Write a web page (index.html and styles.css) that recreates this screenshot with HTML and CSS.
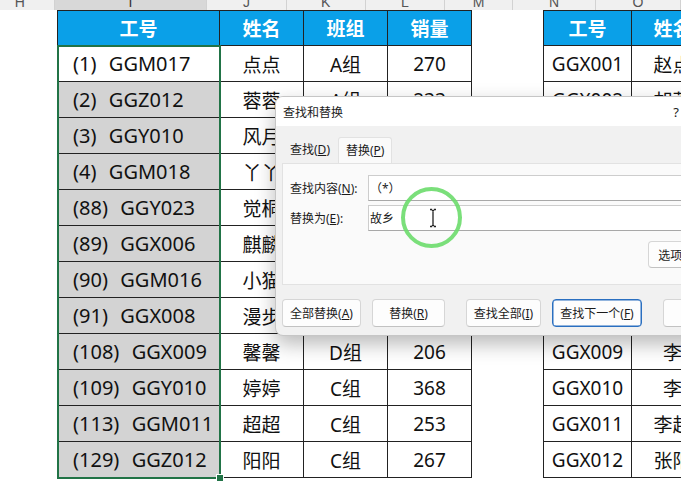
FILE: index.html
```html
<!DOCTYPE html>
<html lang="zh-CN">
<head>
<meta charset="utf-8">
<title>查找和替换</title>
<link rel="stylesheet" href="styles.css">
</head>
<body>
<div class="colheads">
  <div class="ch w-h"><span>H</span></div>
  <div class="ch w-i sel"><span>I</span></div>
  <div class="ch w-j"><span>J</span></div>
  <div class="ch w-k"><span>K</span></div>
  <div class="ch w-l"><span>L</span></div>
  <div class="ch w-m"><span>M</span></div>
  <div class="ch w-n"><span>N</span></div>
  <div class="ch w-o"><span>O</span></div>
</div>
<div class="sheet">
  <div class="gutter"></div>
  <div class="tbl">
    <div class="row head"><div class="cell c-i">工号</div><div class="cell c-j">姓名</div><div class="cell c-k">班组</div><div class="cell c-l">销量</div></div>
    <div class="row"><div class="cell c-i id active">(1)  GGM017</div><div class="cell c-j">点点</div><div class="cell c-k">A组</div><div class="cell c-l">270</div></div>
    <div class="row"><div class="cell c-i id">(2)  GGZ012</div><div class="cell c-j">蓉蓉</div><div class="cell c-k">A组</div><div class="cell c-l">233</div></div>
    <div class="row"><div class="cell c-i id">(3)  GGY010</div><div class="cell c-j">风月</div><div class="cell c-k">B组</div><div class="cell c-l">198</div></div>
    <div class="row"><div class="cell c-i id">(4)  GGM018</div><div class="cell c-j">丫丫</div><div class="cell c-k">B组</div><div class="cell c-l">312</div></div>
    <div class="row"><div class="cell c-i id">(88)  GGY023</div><div class="cell c-j">觉桐</div><div class="cell c-k">B组</div><div class="cell c-l">245</div></div>
    <div class="row"><div class="cell c-i id">(89)  GGX006</div><div class="cell c-j">麒麟</div><div class="cell c-k">C组</div><div class="cell c-l">287</div></div>
    <div class="row"><div class="cell c-i id">(90)  GGM016</div><div class="cell c-j">小猫</div><div class="cell c-k">D组</div><div class="cell c-l">176</div></div>
    <div class="row"><div class="cell c-i id">(91)  GGX008</div><div class="cell c-j">漫步</div><div class="cell c-k">D组</div><div class="cell c-l">301</div></div>
    <div class="row"><div class="cell c-i id">(108)  GGX009</div><div class="cell c-j">馨馨</div><div class="cell c-k">D组</div><div class="cell c-l">206</div></div>
    <div class="row"><div class="cell c-i id">(109)  GGY010</div><div class="cell c-j">婷婷</div><div class="cell c-k">C组</div><div class="cell c-l">368</div></div>
    <div class="row"><div class="cell c-i id">(113)  GGM011</div><div class="cell c-j">超超</div><div class="cell c-k">C组</div><div class="cell c-l">253</div></div>
    <div class="row"><div class="cell c-i id">(129)  GGZ012</div><div class="cell c-j">阳阳</div><div class="cell c-k">C组</div><div class="cell c-l">267</div></div>
    <div class="selection"><div class="handle"></div></div>
  </div>
  <div class="gap"></div>
  <div class="tbl">
    <div class="row head"><div class="cell c-n">工号</div><div class="cell c-o">姓名</div></div>
    <div class="row"><div class="cell c-n">GGX001</div><div class="cell c-o">赵点</div></div>
    <div class="row"><div class="cell c-n">GGX002</div><div class="cell c-o">胡蓉</div></div>
    <div class="row"><div class="cell c-n">GGX003</div><div class="cell c-o">王风</div></div>
    <div class="row"><div class="cell c-n">GGX004</div><div class="cell c-o">刘丫</div></div>
    <div class="row"><div class="cell c-n">GGX005</div><div class="cell c-o">陈觉</div></div>
    <div class="row"><div class="cell c-n">GGX006</div><div class="cell c-o">周麒</div></div>
    <div class="row"><div class="cell c-n">GGX007</div><div class="cell c-o">吴猫</div></div>
    <div class="row"><div class="cell c-n">GGX008</div><div class="cell c-o">郑漫</div></div>
    <div class="row"><div class="cell c-n">GGX009</div><div class="cell c-o">李</div></div>
    <div class="row"><div class="cell c-n">GGX010</div><div class="cell c-o">李</div></div>
    <div class="row"><div class="cell c-n">GGX011</div><div class="cell c-o">李超</div></div>
    <div class="row"><div class="cell c-n">GGX012</div><div class="cell c-o">张阳</div></div>
  </div>
</div>

<div class="dlg">
  <div class="title"><span>查找和替换</span><span class="spacer"></span><span class="help">?</span><span class="close">×</span></div>
  <div class="dbody">
    <div class="tabs">
      <div class="tab">查找(<u>D</u>)</div>
      <div class="tab on">替换(<u>P</u>)</div>
    </div>
    <div class="panel">
      <div class="frow"><div class="lbl">查找内容(<u>N</u>):</div><div class="inp">（*）</div></div>
      <div class="frow"><div class="lbl">替换为(<u>E</u>):</div><div class="inp">故乡</div></div>
      <div class="optrow"><div class="btn opt">选项(<u>T</u>) &gt;&gt;</div></div>
    </div>
    <div class="btnrow">
      <div class="btn b1">全部替换(<u>A</u>)</div>
      <div class="btn b2">替换(<u>R</u>)</div>
      <div class="btn b3">查找全部(<u>I</u>)</div>
      <div class="btn b4 focus">查找下一个(<u>F</u>)</div>
      <div class="btn b5">关闭</div>
    </div>
  </div>
</div>

<div class="ring"></div>
<svg class="ibeam" width="10" height="20" viewBox="0 0 10 20"><path d="M2 1.5h2.2M5.8 1.5H8M5 2v16M2 18.5h2.2M5.8 18.5H8M4 2.2l1 .8 1-.8M4 17.8l1-.8 1 .8" stroke="#222" stroke-width="1.3" fill="none"/></svg>
</body>
</html>
```
FILE: styles.css
```css
body {
  margin: 0;
  width: 681px;
  height: 494px;
  overflow: hidden;
  background: #fff;
  position: relative;
  font-family: "Noto Sans", "Noto Sans CJK SC", sans-serif;
}

.colheads {
  display: flex;
  height: 10px;
  background: #f0f0f0;
  overflow: hidden;
}
.ch {
  box-sizing: border-box;
  height: 10px;
  border-right: 1px solid #d2d2d2;
  overflow: hidden;
  text-align: center;
  color: #555;
  font: 14px/16px "Liberation Sans", sans-serif;
}
.ch span { display: block; margin-top: -6px; }
.ch.sel { background: #d8d8d8; color: #333; }
.w-h { width: 57px; padding-right: 14px; }
.w-i { width: 162px; }
.w-j { width: 84px; }
.w-k { width: 84px; }
.w-l { width: 84px; }
.w-m { width: 72px; }
.w-n { width: 88px; }
.w-o { width: 90px; }

.sheet { display: flex; align-items: flex-start; }
.gutter { width: 57px; flex: none; }
.gap { width: 71px; flex: none; }
.tbl {
  position: relative;
  border-top: 1px solid #222;
  border-left: 1px solid #222;
  flex: none;
}
.row { display: flex; height: 36px; }
.row.head { height: 35px; background: #0aa0e8; }
.row.head .cell { color: #fff; font-weight: 700; }
.cell {
  box-sizing: border-box;
  border-right: 1px solid #222;
  border-bottom: 1px solid #222;
  display: flex;
  align-items: center;
  justify-content: center;
  font-size: 19px;
  color: #111;
  white-space: pre;
}
.c-i { width: 162px; }
.c-j { width: 84px; }
.c-k { width: 84px; }
.c-l { width: 84px; }
.c-n { width: 88px; }
.c-o { width: 82px; }
.cell.id {
  justify-content: flex-start;
  padding-left: 15px;
  background: #d3d3d3;
  font-size: 20px;
  word-spacing: 1px;
}
.cell.id.active { background: #fff; }

.selection {
  position: absolute;
  left: -1px;
  top: 34px;
  width: 164px;
  height: 434px;
  box-sizing: border-box;
  border: 2px solid #217346;
}
.handle {
  position: absolute;
  right: -5px;
  bottom: -5px;
  width: 6px;
  height: 6px;
  background: #217346;
  border: 1px solid #fff;
}

.dlg {
  position: absolute;
  left: 275px;
  top: 96px;
  width: 480px;
  height: 240px;
  box-sizing: border-box;
  border: 1px solid #c6c6c6;
  border-radius: 8px;
  background: #f1f1f1;
  box-shadow: 0 8px 20px rgba(0, 0, 0, 0.28);
  overflow: hidden;
  font-size: 12px;
  color: #1b1b1b;
}
.title {
  height: 29px;
  background: #fff;
  display: flex;
  align-items: center;
  padding: 0 7px;
}
.spacer { flex: 1; }
.help { margin-right: 48px; font-size: 13px; }
.close { width: 20px; text-align: center; font-size: 14px; }

.dbody { padding: 0 6px; }
.tabs { display: flex; margin-top: 11px; height: 26px; }
.tab {
  box-sizing: border-box;
  height: 26px;
  line-height: 26px;
  padding: 0 8px;
}
.tab.on {
  background: #fafafa;
  border: 1px solid #e2e2e2;
  border-bottom: none;
  border-radius: 3px 3px 0 0;
  padding: 0 7px;
}
.panel {
  box-sizing: border-box;
  height: 122px;
  background: #fafafa;
  border: 1px solid #e2e2e2;
  padding: 11px 0 0 7px;
}
.frow {
  display: flex;
  align-items: center;
  height: 26px;
  margin-bottom: 4px;
}
.lbl { width: 78px; flex: none; }
.inp {
  flex: 1;
  height: 26px;
  box-sizing: border-box;
  background: #fff;
  border: 1px solid #cdcdcd;
  border-bottom-color: #a8a8a8;
  padding-left: 1px;
  display: flex;
  align-items: center;
}
.optrow {
  display: flex;
  justify-content: flex-end;
  margin-top: 10px;
  padding-right: 24px;
}
.btn {
  box-sizing: border-box;
  height: 28px;
  background: #fdfdfd;
  border: 1px solid #d6d6d6;
  border-bottom-color: #c2c2c2;
  border-radius: 4px;
  display: flex;
  align-items: center;
  justify-content: center;
  white-space: nowrap;
  flex: none;
}
.btn.opt { width: 75px; height: 27px; }
.btnrow { display: flex; margin-top: 14px; }
.b1 { width: 79px; margin-right: 11px; }
.b2 { width: 73px; margin-right: 21px; }
.b3 { width: 75px; margin-right: 11px; }
.b4 { width: 90px; margin-right: 21px; }
.b5 { width: 80px; }
.btn.focus { border: 1px solid #2a6fc0; box-shadow: inset 0 0 0 0.5px #2a6fc0; }

.ring {
  position: absolute;
  left: 401px;
  top: 187px;
  width: 61px;
  height: 61px;
  box-sizing: border-box;
  border: 4px solid rgba(108, 220, 108, 0.9);
  border-radius: 50%;
}
.ibeam {
  position: absolute;
  left: 428px;
  top: 208px;
}
```
